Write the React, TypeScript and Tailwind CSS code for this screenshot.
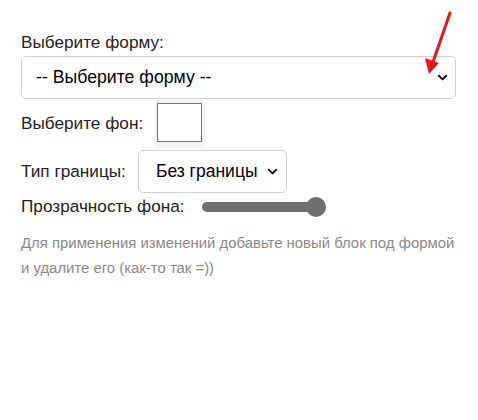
import { ChevronDown } from 'lucide-react';

export default function App() {
  return (
    <div className="relative w-[478px] h-[420px] bg-white font-['Liberation_Sans',Arial,sans-serif] text-[#222]">
      <div className="pl-[21px] pr-[22px] pt-[33px]">
        {/* Shape */}
        <div className="text-[17.2px] leading-[19px]">Выберите форму:</div>
        <div className="mt-[4px] h-[43px] w-[435px] rounded-[5px] border border-[#cfcfcf] flex items-center justify-between pl-[14px] pr-[5px]">
          <span className="text-[17.7px] text-black">-- Выберите форму --</span>
          <ChevronDown className="w-[15px] h-[15px] text-black" strokeWidth={3} />
        </div>

        {/* Background colour */}
        <div className="mt-[1px] h-[48px] flex items-center gap-[11px]">
          <span className="text-[17.2px]">Выберите фон:</span>
          <div className="w-[51px] h-[48px] rounded-[6px] bg-[#f4f4f4] flex items-center justify-center pb-[4px]">
            <div className="w-[45px] h-[39px] bg-white border border-[#777]" />
          </div>
        </div>

        {/* Border type */}
        <div className="mt-[2px] h-[43px] flex items-center gap-[12px]">
          <span className="text-[17.2px]">Тип границы:</span>
          <div className="h-[43px] w-[149px] rounded-[5px] border border-[#cfcfcf] flex items-center justify-between pl-[17px] pr-[6px]">
            <span className="text-[17.5px] text-black">Без границы</span>
            <ChevronDown className="w-[15px] h-[15px] text-black" strokeWidth={3} />
          </div>
        </div>

        {/* Opacity */}
        <div className="mt-[3px] h-[22px] flex items-center gap-[17px]">
          <span className="text-[17.2px]">Прозрачность фона:</span>
          <div className="relative w-[124px] h-[20px] flex items-center">
            <div className="w-[118px] h-[10px] rounded-full bg-[#707070]" />
            <div className="absolute right-0 top-0 w-[20px] h-[20px] rounded-full bg-[#707070]" />
          </div>
        </div>

        <p className="mt-[13px] whitespace-nowrap text-[14.9px] leading-[25px] text-[#8a8a8a]">
          Для применения изменений добавьте новый блок под формой
          <br />и удалите его (как-то так =))
        </p>
      </div>

      {/* Red pointer arrow */}
      <svg className="absolute left-0 top-0" width="478" height="100" viewBox="0 0 478 100">
        <line x1="450" y1="13" x2="433" y2="62" stroke="#e8141b" strokeWidth="3" strokeLinecap="round" />
        <polygon points="429,74 425,58 439,63" fill="#e8141b" />
      </svg>
    </div>
  );
}
